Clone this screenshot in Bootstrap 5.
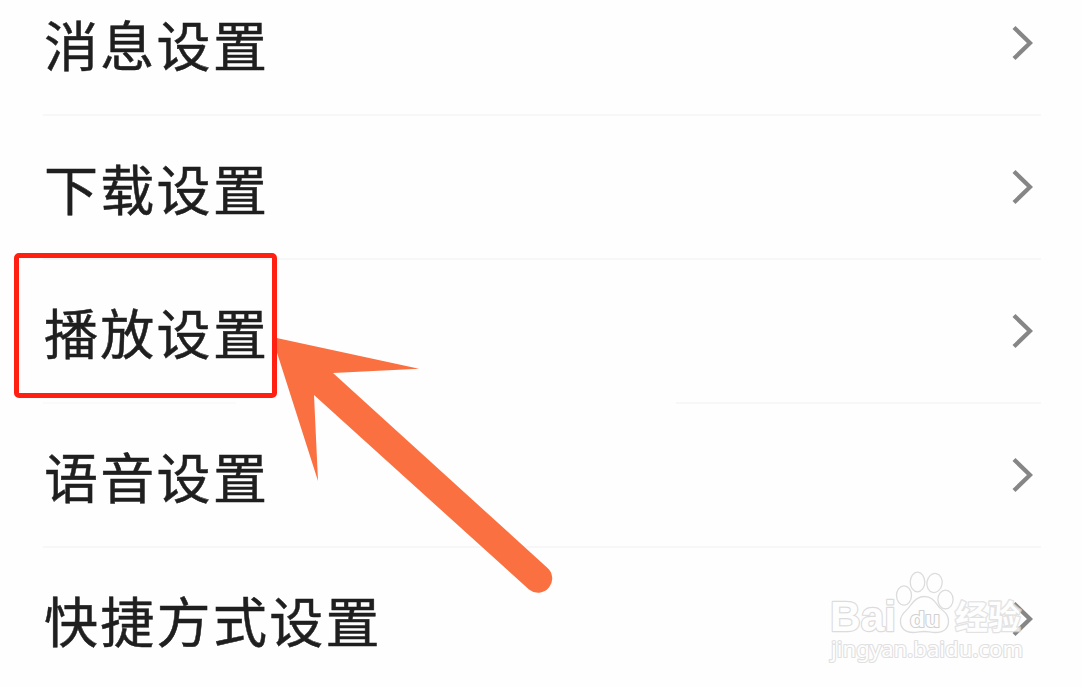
<!DOCTYPE html>
<html lang="zh-CN">
<head>
    <meta charset="UTF-8">
    <meta name="viewport" content="width=device-width, initial-scale=1.0">
    <title>设置</title>
    <link href="https://cdn.jsdelivr.net/npm/bootstrap@5.3.0/dist/css/bootstrap.min.css" rel="stylesheet">
    <style>
        body {
            background: #fefefe;
            color: #1f1f1f;
            font-family: "Noto Sans CJK SC", sans-serif;
        }
        .screen {
            height: 687px;
        }
        .settings {
            margin: -28px 41px 0 43px;
        }
        .setting {
            height: 144px;
            padding: 0 8px 0 1px;
            border-bottom: 2px solid #f7f7f7;
        }
        .setting-name {
            padding-top: 1px;
            font-size: 54px;
            line-height: 80px;
            letter-spacing: 2.3px;
            -webkit-text-stroke: 0.5px #1f1f1f;
        }
        .setting.partial-line {
            border-image: linear-gradient(to right, #fafafa 194px, transparent 194px, transparent 632px, #f7f7f7 632px) 2;
        }
        .chevron {
            width: 24px;
            height: 38px;
        }
        .highlight {
            left: 14px;
            top: 253px;
            width: 263px;
            height: 145px;
            border: 5px solid #ff2012;
            border-radius: 5px;
        }
        .overlay {
            left: 0;
            top: 0;
        }
    </style>
</head>
<body>

<main class="screen position-relative overflow-hidden">
    <div class="overflow-hidden">
        <div class="settings">
            <div class="setting d-flex align-items-center justify-content-between">
                <span class="setting-name">消息设置</span>
                <svg class="chevron" viewBox="0 0 24 38" fill="none" stroke="#868686" stroke-width="4.3"><path d="M5 3.500L21 19L5 34.500"/></svg>
            </div>
            <div class="setting d-flex align-items-center justify-content-between">
                <span class="setting-name">下载设置</span>
                <svg class="chevron" viewBox="0 0 24 38" fill="none" stroke="#868686" stroke-width="4.3"><path d="M5 3.500L21 19L5 34.500"/></svg>
            </div>
            <div class="setting partial-line d-flex align-items-center justify-content-between">
                <span class="setting-name">播放设置</span>
                <svg class="chevron" viewBox="0 0 24 38" fill="none" stroke="#868686" stroke-width="4.3"><path d="M5 3.500L21 19L5 34.500"/></svg>
            </div>
            <div class="setting d-flex align-items-center justify-content-between">
                <span class="setting-name">语音设置</span>
                <svg class="chevron" viewBox="0 0 24 38" fill="none" stroke="#868686" stroke-width="4.3"><path d="M5 3.500L21 19L5 34.500"/></svg>
            </div>
            <div class="setting d-flex align-items-center justify-content-between">
                <span class="setting-name">快捷方式设置</span>
                <svg class="chevron" viewBox="0 0 24 38" fill="none" stroke="#868686" stroke-width="4.3"><path d="M5 3.500L21 19L5 34.500"/></svg>
            </div>
        </div>
    </div>

    <!-- arrow and watermark -->
    <svg class="overlay position-absolute" width="1082" height="687" viewBox="0 0 1082 687">
        <path fill="#fb7040" d="M272 337L419 368.7L333 373L547 567.5A14 14 0 0 1 529 589.5L314 395L318 481Z"/>
        <g fill="#fefefe" stroke="#dcdcdc" stroke-width="1.3" stroke-linejoin="round">
            <text x="830" y="631" font-family="'Liberation Sans', sans-serif" font-weight="bold" font-size="43" textLength="66" lengthAdjust="spacingAndGlyphs" stroke-width="2.4" paint-order="stroke">Bai</text>
            <ellipse cx="904" cy="595.5" rx="7.5" ry="9.7"/>
            <ellipse cx="917.5" cy="582" rx="7.3" ry="9.8"/>
            <ellipse cx="934.5" cy="583" rx="7.6" ry="9.6" transform="rotate(10 934.5 583)"/>
            <ellipse cx="945.5" cy="599.5" rx="7.6" ry="9.4"/>
            <path d="M924.500 596.500C932 596.500 935 602 939 607C943 611 949 614 948.500 622C948 630 942 632.500 935 632.500C931 632.500 928 631.500 924.500 631.500C920 631.500 918 632.500 913 632.500C905 632.500 900 628 900.500 620C901 613 907 611 910 606C914 600 918 596.500 924.500 596.500Z"/>
            <text x="910" y="626.5" font-family="'Liberation Sans', sans-serif" font-weight="bold" font-size="22" textLength="30" lengthAdjust="spacingAndGlyphs" stroke="#d0d0d0" stroke-width="2" paint-order="stroke">du</text>
            <text x="955" y="628.5" font-family="'Noto Sans CJK SC', sans-serif" font-size="33" font-weight="bold" stroke-width="2.6" paint-order="stroke" opacity=".8">经验</text>
            <text x="831" y="657" font-family="'Noto Sans', sans-serif" font-size="22" stroke="#e0e0e0" stroke-width="2.2" paint-order="stroke" textLength="192">jingyan.baidu.com</text>
        </g>
    </svg>

    <div class="highlight position-absolute"></div>
</main>

<script src="https://cdn.jsdelivr.net/npm/bootstrap@5.3.0/dist/js/bootstrap.bundle.min.js"></script>
</body>
</html>
